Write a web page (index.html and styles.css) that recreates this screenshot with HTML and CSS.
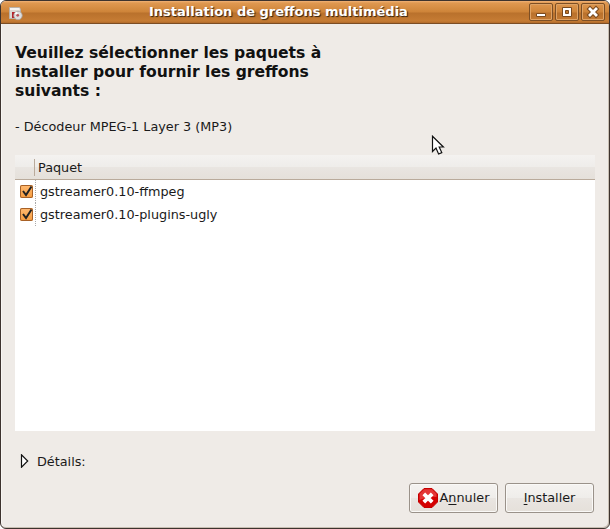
FILE: index.html
```html
<!DOCTYPE html>
<html lang="fr">
<head>
<meta charset="utf-8">
<title>Installation de greffons multimédia</title>
<link rel="stylesheet" href="styles.css">
</head>
<body>
<div class="window">
  <header class="titlebar">
    <svg class="app-icon" width="16" height="16" viewBox="0 0 16 16">
      <path d="M1.500 1.500h10l1 2v9h-11z" fill="#ddd9d4" stroke="#b9b1aa"/>
      <path d="M2 2h9.500v2H2z" fill="#f5f3f1"/>
      <path d="M4 6h3v6H4z" fill="#b3242b"/>
      <circle cx="10" cy="9.500" r="4.200" fill="#dedede" stroke="#aaa6a4" stroke-width=".8"/>
      <path d="M10 9.500L6.500 7.500A4 4 0 0 1 9 5.700z" fill="#fff"/>
      <circle cx="9.700" cy="9.300" r="1.400" fill="#b9545a"/>
    </svg>
    <h1 class="title">Installation de greffons multimédia</h1>
    <div class="controls">
      <span class="control"><svg width="22" height="16" viewBox="0 0 22 16"><path d="M6.500 9.500h9v3h-9z" fill="#fff" stroke="#7a4a1e"/></svg></span>
      <span class="control"><svg width="22" height="16" viewBox="0 0 22 16"><path d="M6.500 3.500h9v9h-9z" fill="#fff" stroke="#7a4a1e"/><path d="M9.500 6.500h3v3h-3z" fill="#c0782f" stroke="#7a4a1e"/></svg></span>
      <span class="control"><svg width="22" height="16" viewBox="0 0 22 16"><path d="M8 5l6 6m0-6l-6 6" stroke="#7a4a1e" stroke-width="4.800" stroke-linecap="square"/><path d="M8 5l6 6m0-6l-6 6" stroke="#fff" stroke-width="2.800" stroke-linecap="square"/></svg></span>
    </div>
  </header>
  <main class="content">
    <h2 class="heading">Veuillez sélectionner les paquets à<br>installer pour fournir les greffons<br>suivants :</h2>
    <p class="codec">- Décodeur MPEG-1 Layer 3 (MP3)</p>
    <section class="list">
      <div class="list-head"><span class="column">Paquet</span></div>
      <label class="row"><span class="check"><svg width="13" height="13" viewBox="0 0 13 13"><path d="M3 6l3 4 5.500-8.500" fill="none" stroke="#222" stroke-width="2"/></svg></span><span class="package">gstreamer0.10-ffmpeg</span></label>
      <label class="row"><span class="check"><svg width="13" height="13" viewBox="0 0 13 13"><path d="M3 6l3 4 5.500-8.500" fill="none" stroke="#222" stroke-width="2"/></svg></span><span class="package">gstreamer0.10-plugins-ugly</span></label>
    </section>
    <div class="details"><svg width="9" height="14" viewBox="0 0 9 14"><path d="M1.500 .8v12.400l6.200-6.200z" fill="#fff" stroke="#111" stroke-width="1.200"/></svg><span>Détails:</span></div>
    <footer class="actions">
      <button class="button"><svg width="20" height="20" viewBox="0 0 20 20"><path d="M6 .5h8L19.500 6v8L14 19.500H6L.5 14V6z" fill="#d40000" stroke="#c40000"/><path d="M6.200 1.200h7.600L18.500 6v3Q10 8 1.500 12V6z" fill="#ed5555" opacity=".65"/><path d="M5.800 5.800l8.400 8.400m0-8.400l-8.400 8.400" stroke="#fff" stroke-width="3.800"/></svg><span>A<u>n</u>nuler</span></button>
      <button class="button"><span><u>I</u>nstaller</span></button>
    </footer>
  </main>
  <svg class="pointer" width="14" height="22" viewBox="0 0 14 22"><path d="M1.500 2.200v15.300l3.500-3.500 2.600 6 3.200-1.400-2.600-5.600h4.200z" fill="#fff" stroke="#111" stroke-width="1.200"/></svg>
</div>
</body>
</html>
```
FILE: styles.css
```css
* { box-sizing: border-box; }
html { background: #fff; }
body {
  margin: 0;
  font: 12.800px/16px "DejaVu Sans", sans-serif;
  color: #1a1a1a;
}
.window {
  position: relative;
  display: flex;
  flex-direction: column;
  width: 610px;
  height: 529px;
  border: 1px solid #3d332e;
  border-radius: 6px;
  background: #efebe7;
  box-shadow: inset -1px -1px #c8beb2, inset 1px 0 #f8f6f3;
  overflow: hidden;
}
.titlebar {
  display: flex;
  align-items: flex-start;
  height: 23px;
  padding: 2px 4px 0 7px;
  border-bottom: 1px solid #7b4d24;
  background: linear-gradient(#f0b277 0, #df9850 2px, #ce8439 11px, #b9712c 12px, #c67c34 20px, #b06a2a 22px);
}
.app-icon { margin-top: 3px; }
.title {
  flex: 1;
  margin: 1px 0 0 125px;
  font-size: 13px;
  line-height: 16px;
  font-weight: bold;
  color: #fff;
  text-shadow: 1px 1px 1px #30200f;
  white-space: nowrap;
}
.controls { display: flex; gap: 2px; }
.control {
  display: flex;
  width: 24px;
  height: 18px;
  border: 1px solid #7d4f25;
  border-radius: 2px;
  box-shadow: inset 0 0 0 1px #dfa365;
}
.content { flex: 1; padding: 20px 14px 14px; }
.heading {
  margin: 0;
  font-size: 15.600px;
  line-height: 19px;
  font-weight: bold;
  color: #111;
  white-space: nowrap;
}
.codec { margin: 18px 0 20px; }
.list { height: 276px; background: #fff; }
.list-head {
  height: 25px;
  padding: 4px 0 0 19px;
  border-bottom: 1px solid #b9aa9b;
  background: linear-gradient(#f4f2f0, #efedea 48%, #e9e5e1 50%, #e5e0da);
}
.column {
  display: block;
  height: 17px;
  padding-left: 3px;
  border-left: 1px solid #b9aa9b;
  line-height: 18px;
}
.row { display: flex; align-items: center; height: 23px; padding-left: 5px; }
.check {
  display: flex;
  width: 13px;
  height: 13px;
  border-radius: 2px;
  background: linear-gradient(#ffba72, #f69b3d);
  box-shadow: inset 0 0 0 1px #a76127;
}
.package {
  height: 23px;
  margin-left: 2px;
  padding-left: 4px;
  border-left: 1px dotted #aaa;
  line-height: 23px;
}
.details { display: flex; align-items: center; gap: 8px; height: 16px; margin: 22px 0 14px 5px; }
.details span { padding-top: 1px; }
.actions { display: flex; justify-content: flex-end; gap: 7px; padding-right: 1px; }
.button {
  display: flex;
  align-items: center;
  justify-content: center;
  gap: 2px;
  width: 89px;
  height: 30px;
  padding: 0;
  border: 1px solid #9a928a;
  border-radius: 3px;
  background: linear-gradient(#f5f3f1, #efedea 49%, #e9e5e1 51%, #e5e0da);
  box-shadow: inset 0 0 0 1px #faf9f7;
  color: #1a1a1a;
  font: inherit;
}
.button u { text-underline-offset: 2px; text-decoration-skip-ink: none; }
.pointer { position: absolute; left: 430px; top: 133px; }
```
